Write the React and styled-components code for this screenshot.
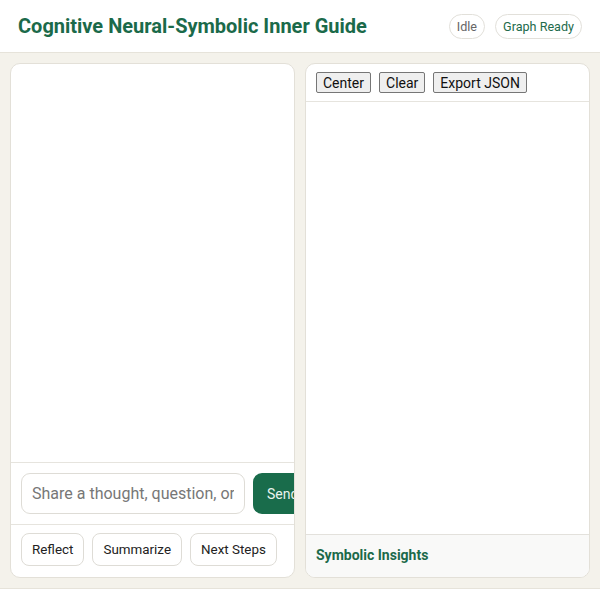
import React from "react";
import styled, { createGlobalStyle } from "styled-components";

const Global = createGlobalStyle`
  html, body { margin: 0; padding: 0; background: #ffffff; }
  body { font-family: Roboto, "Liberation Sans", sans-serif; }
  * { box-sizing: border-box; }
`;

const Shell = styled.div`
  display: flex;
  flex-direction: column;
  width: 600px;
  height: 589px;
`;

const Header = styled.header`
  height: 53px;
  flex-shrink: 0;
  display: flex;
  align-items: center;
  justify-content: space-between;
  padding: 0 18px;
  background: #ffffff;
  border-bottom: 1px solid #e6e3da;
`;

const Title = styled.h1`
  margin: 0;
  font-size: 20px;
  font-weight: 700;
  color: #1b6a4a;
`;

const Badges = styled.div`
  display: flex;
  gap: 10px;
`;

const Badge = styled.span`
  display: inline-flex;
  align-items: center;
  height: 25px;
  padding: 0 7px;
  border: 1px solid #e2e0da;
  border-radius: 13px;
  font-size: 12.6px;
  color: ${(p) => (p.$green ? "#1e6b4c" : "#666")};
  background: #fff;
`;

const Main = styled.main`
  flex: 1;
  display: grid;
  grid-template-columns: 285px 285px;
  gap: 10px;
  padding: 10px;
  background: #f4f2eb;
  border-bottom: 1px solid #e6e3da;
  min-height: 0;
`;

const Panel = styled.section`
  display: flex;
  flex-direction: column;
  background: #fff;
  border: 1px solid #e3e0d8;
  border-radius: 10px;
  overflow: hidden;
  min-height: 0;
`;

const Messages = styled.div`
  flex: 1;
  border-bottom: 1px solid #e6e4de;
`;

const InputRow = styled.div`
  display: flex;
  gap: 8px;
  padding: 10px;
  border-bottom: 1px solid #e6e4de;
`;

const Input = styled.input`
  flex: 0 0 224px;
  width: 224px;
  height: 41px;
  border: 1px solid #dedcd6;
  border-radius: 9px;
  padding: 0 10px;
  font-family: Roboto, "Liberation Sans", sans-serif;
  font-size: 16px;
  color: #333;
  &::placeholder { color: #777; }
`;

const SendButton = styled.button`
  flex: 0 0 70px;
  height: 41px;
  border: none;
  border-radius: 9px;
  background: #196c4b;
  color: #e8f3ee;
  font-family: Roboto, "Liberation Sans", sans-serif;
  font-size: 14px;
  padding: 0 14px;
  text-align: left;
`;

const QuickRow = styled.div`
  display: flex;
  gap: 8px;
  padding: 8px 10px 11px;
`;

const QuickButton = styled.button`
  flex-shrink: 0;
  white-space: nowrap;
  height: 33px;
  padding: 0 10px;
  border: 1px solid #dedcd6;
  border-radius: 8px;
  background: #fff;
  color: #222;
  font-family: Roboto, "Liberation Sans", sans-serif;
  font-size: 13.4px;
`;

const Toolbar = styled.div`
  display: flex;
  gap: 8px;
  padding: 8px 10px;
  border-bottom: 1px solid #e6e4de;
`;

const ToolButton = styled.button`
  height: 21px;
  padding: 0 6px;
  border: 1px solid #767676;
  border-radius: 2px;
  background: #efefef;
  color: #111;
  font-family: Roboto, "Liberation Sans", sans-serif;
  font-size: 14px;
  line-height: 1;
`;

const Canvas = styled.div`
  flex: 1;
  border-bottom: 1px solid #e3e1dc;
`;

const Insights = styled.div`
  height: 42px;
  display: flex;
  align-items: center;
  padding: 0 10px 3px;
  background: #f9f9f8;
  font-size: 14px;
  font-weight: 700;
  color: #1b6a4a;
`;

export default function App() {
  return (
    <>
      <Global />
      <Shell>
        <Header>
          <Title>Cognitive Neural-Symbolic Inner Guide</Title>
          <Badges>
            <Badge>Idle</Badge>
            <Badge $green>Graph Ready</Badge>
          </Badges>
        </Header>
        <Main>
          <Panel>
            <Messages />
            <InputRow>
              <Input placeholder="Share a thought, question, or reflection..." />
              <SendButton>Send</SendButton>
            </InputRow>
            <QuickRow>
              <QuickButton>Reflect</QuickButton>
              <QuickButton>Summarize</QuickButton>
              <QuickButton>Next Steps</QuickButton>
            </QuickRow>
          </Panel>
          <Panel>
            <Toolbar>
              <ToolButton>Center</ToolButton>
              <ToolButton>Clear</ToolButton>
              <ToolButton>Export JSON</ToolButton>
            </Toolbar>
            <Canvas />
            <Insights>Symbolic Insights</Insights>
          </Panel>
        </Main>
      </Shell>
    </>
  );
}
